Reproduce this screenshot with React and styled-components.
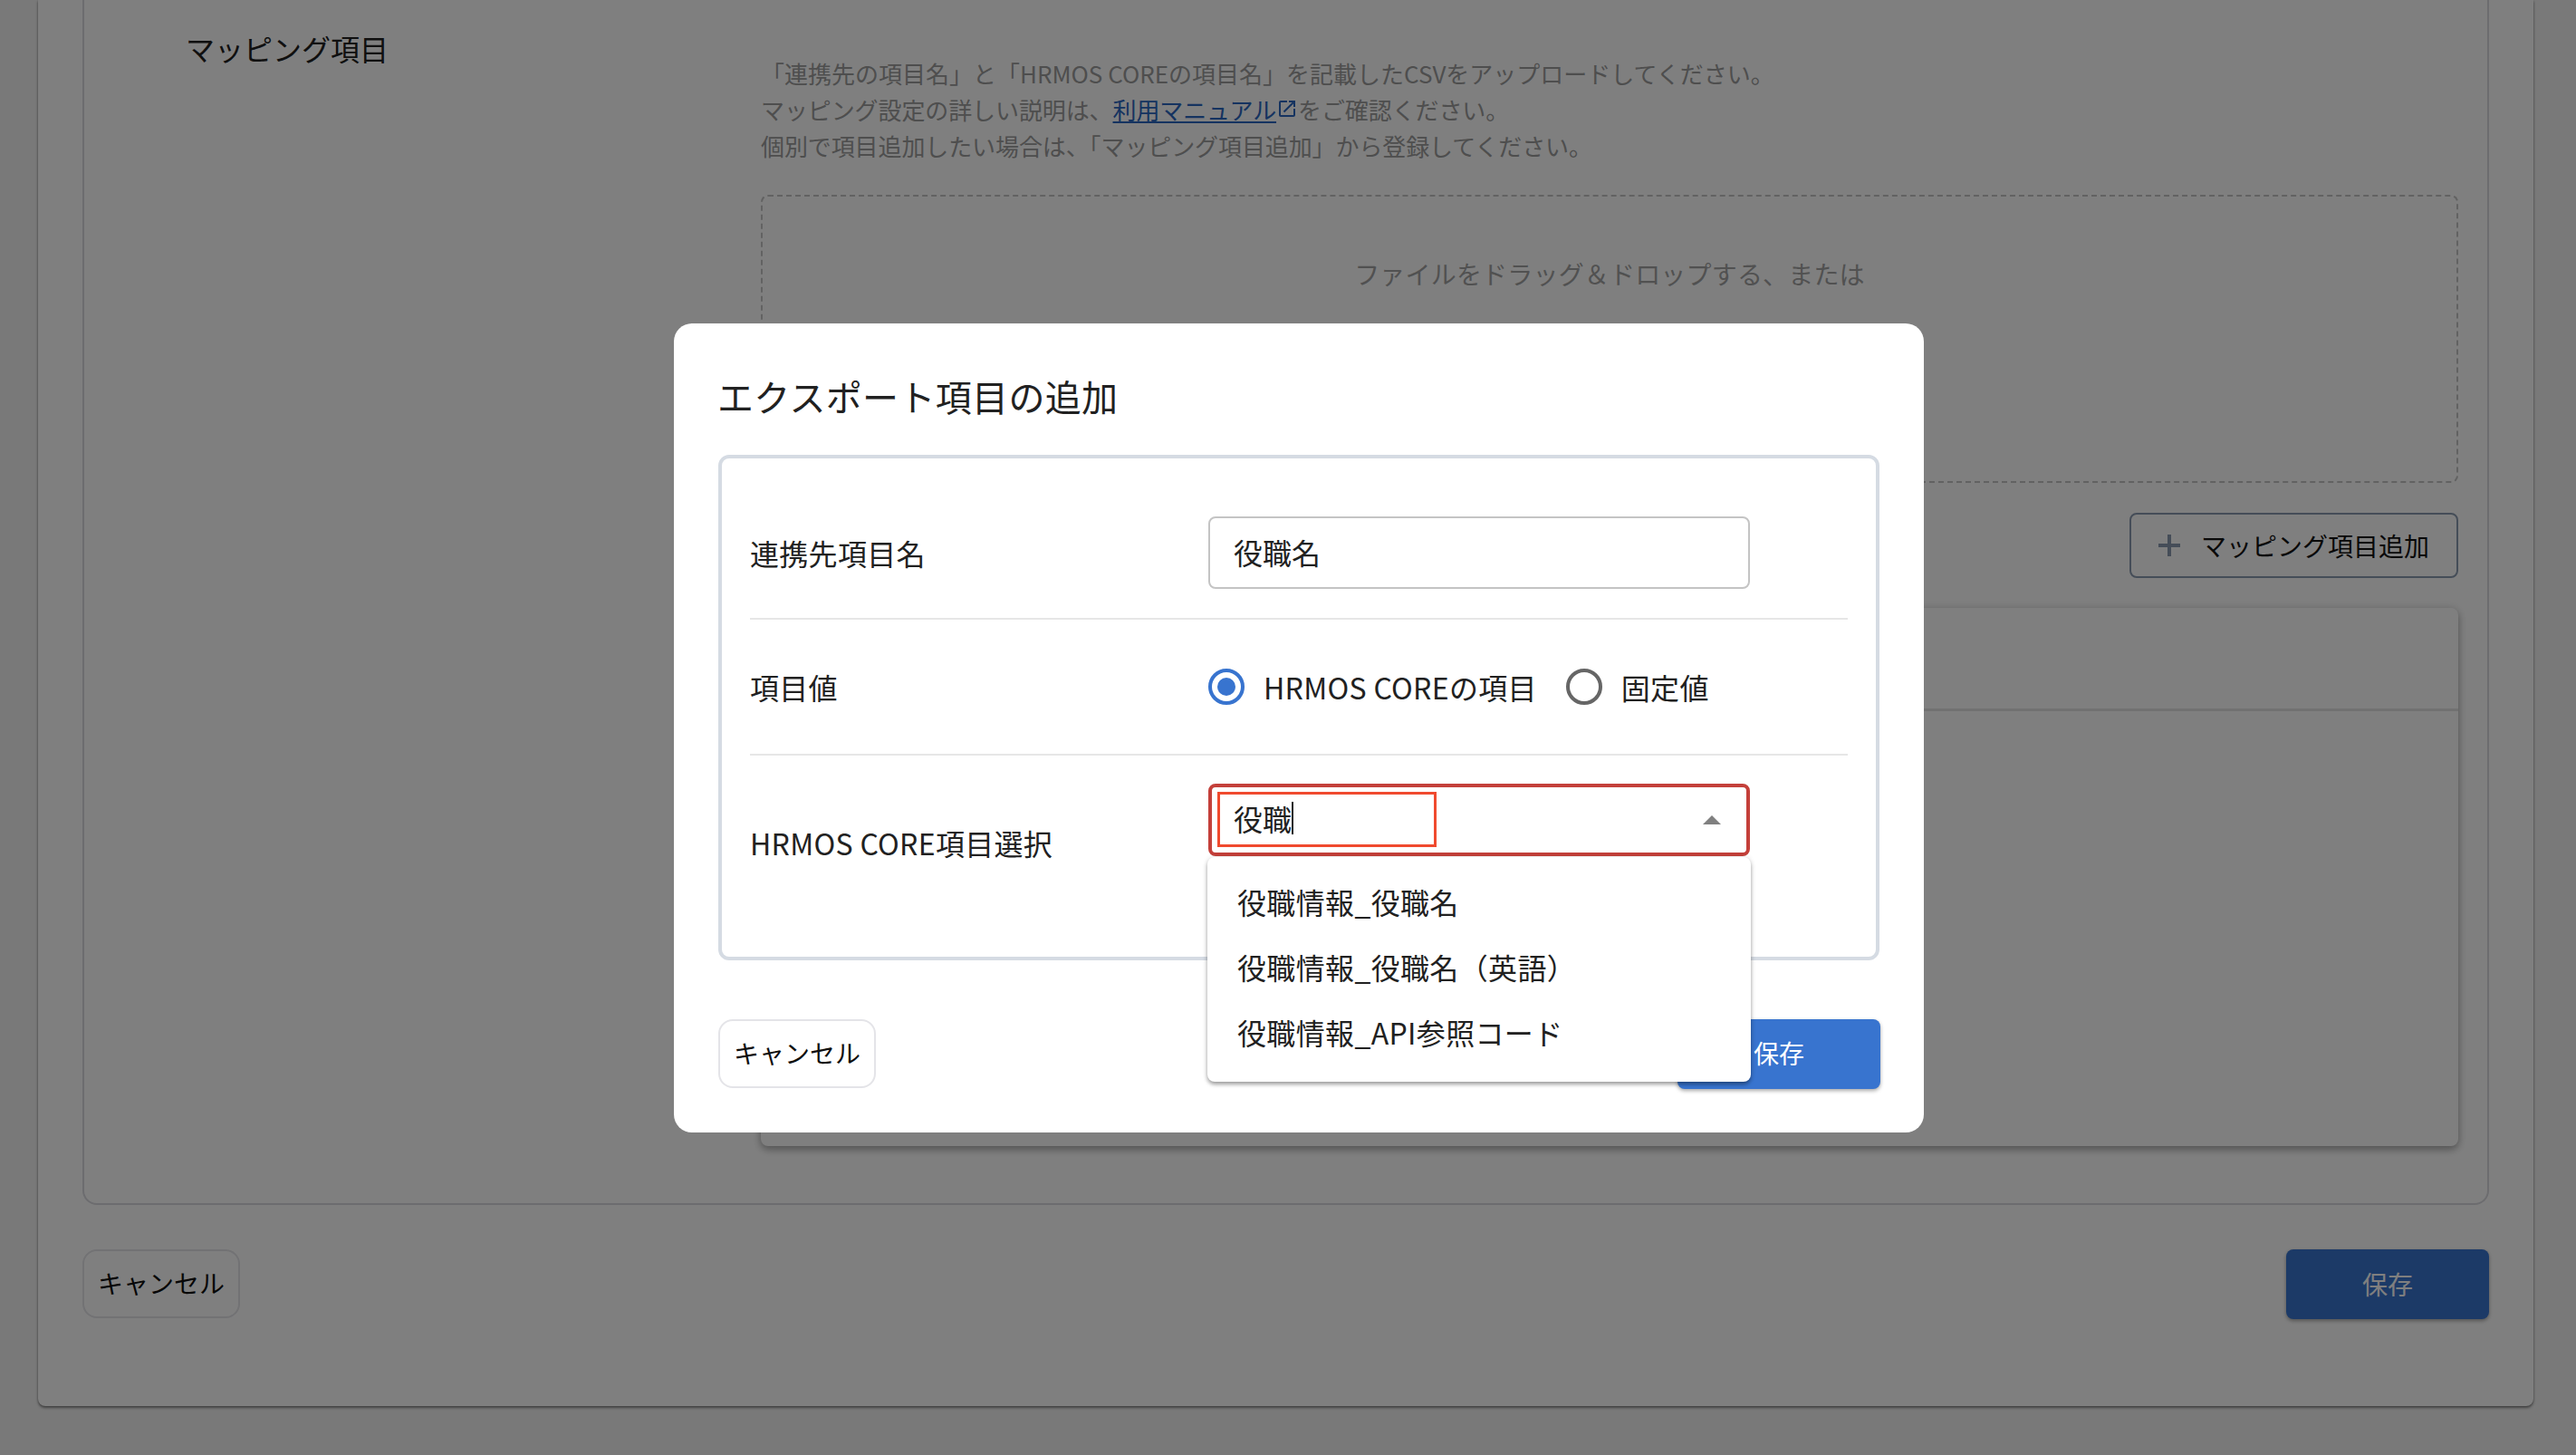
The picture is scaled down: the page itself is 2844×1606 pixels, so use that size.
import React from "react";
import styled, { createGlobalStyle } from "styled-components";

const FONT = `"Noto Sans CJK JP", "Noto Sans", sans-serif`;

const Global = createGlobalStyle`
  html, body { margin: 0; padding: 0; width: 2844px; height: 1606px; overflow: hidden; background: #f2f2f2; }
  * { box-sizing: border-box; }
  body { font-family: ${FONT}; color: #212121; }
`;

const Page = styled.div`
  position: relative;
  width: 2844px;
  height: 1606px;
  padding: 0 47px 54px 42px;
  overflow: hidden;
`;
const Card = styled.main`
  height: 1552px;
  background: #fff;
  border-radius: 0 0 8px 8px;
  box-shadow: 0 2px 3px rgba(0, 0, 0, 0.45), 0 0 2px rgba(0, 0, 0, 0.2);
  padding: 0 49px;
`;
const SettingsPanel = styled.section`
  height: 1330px;
  border: 2px solid #d9d9de;
  border-top: none;
  border-radius: 0 0 16px 16px;
  padding: 0 32px 0 112px;
  display: grid;
  grid-template-columns: 635px 1fr;
`;
const SectionTitle = styled.h2`
  margin: 30px 0 0;
  font-size: 32px;
  line-height: 46px;
  font-weight: 400;
  color: #212121;
`;
const SectionBody = styled.div`
  padding-top: 61px;
  display: flex;
  flex-direction: column;
`;
const Help = styled.p`
  margin: 0;
  font-size: 26px;
  line-height: 40px;
  color: #9c9c9c;
  letter-spacing: ${(p) => (p.$tight ? "-0.1px" : "0")};
`;
const ManualLink = styled.a`
  color: #2a66c0;
  text-decoration: underline;
`;
const LinkIcon = styled.svg`
  width: 24px;
  height: 24px;
  vertical-align: 0;
  fill: #2a66c0;
`;
const DropZone = styled.div`
  margin-top: 34px;
  height: 318px;
  border: 2px dashed #c4c4c4;
  border-radius: 8px;
  text-align: center;
  padding-top: 65px;
  font-size: 28px;
  line-height: 40px;
  letter-spacing: 0.18px;
  color: #a3a3a3;
`;
const AddRow = styled.div`
  margin-top: 33px;
  display: flex;
  justify-content: flex-end;
`;
const AddButton = styled.button`
  width: 363px;
  height: 72px;
  display: flex;
  align-items: center;
  padding: 0 0 0 28px;
  gap: 21px;
  background: transparent;
  border: 2px solid #8a9bb0;
  border-radius: 8px;
  font: 400 28px/40px ${FONT};
  color: #121212;
`;
const PlusIcon = styled.svg`
  width: 28px;
  height: 28px;
  stroke: #8a9bb0;
  stroke-width: 4;
  fill: none;
`;
const TablePanel = styled.div`
  margin-top: 33px;
  height: 594px;
  background: #fff;
  border-radius: 8px;
  box-shadow: 0 4px 8px rgba(0, 0, 0, 0.3), 0 0 12px rgba(0, 0, 0, 0.1);
`;
const TableHead = styled.div`
  height: 114px;
  border-bottom: 3px solid #e2e2e2;
`;
const PageFooter = styled.div`
  margin-top: 49px;
  display: flex;
  justify-content: space-between;
`;
const CancelButton = styled.button`
  width: 174px;
  height: 76px;
  background: #fff;
  border: 2px solid #e4e4e8;
  border-radius: 16px;
  font: 400 28px/40px ${FONT};
  color: #0f0f0f;
  padding: 0 0 2px;
`;
const SaveButton = styled.button`
  width: 224px;
  height: 77px;
  background: #3874cf;
  border: none;
  border-radius: 8px;
  box-shadow: 0 2px 4px rgba(0, 0, 0, 0.35);
  font: 400 28px/40px ${FONT};
  color: #fff;
  padding: 0 0 2px;
`;
const Overlay = styled.div`
  position: absolute;
  inset: 0;
  background: rgba(0, 0, 0, 0.5);
  display: flex;
  align-items: center;
  justify-content: center;
  padding-left: 24px;
`;
const Dialog = styled.div`
  width: 1380px;
  height: 893px;
  background: #fff;
  border-radius: 20px;
  padding: 0 49px;
`;
const DialogTitle = styled.h1`
  margin: 0 0 0 -1px;
  height: 145px;
  padding-top: 51px;
  font-size: 40px;
  line-height: 58px;
  font-weight: 400;
  letter-spacing: 0.33px;
  color: #212121;
`;
const FormBox = styled.div`
  height: 558px;
  width: 1282px;
  border: 4px solid #d5dbe3;
  border-radius: 12px;
  padding: 32px 31px 0;
`;
const FormRow = styled.div`
  display: grid;
  grid-template-columns: 506px 598px;
  align-items: center;
  padding: ${(p) => (p.$last ? "0" : "32px 0")};
  border-bottom: ${(p) => (p.$last ? "none" : "2px solid #e6e6e6")};
`;
const FieldLabel = styled.label`
  font-size: 32px;
  line-height: 46px;
  letter-spacing: 0.3px;
  color: #212121;
`;
const TextField = styled.input`
  width: 598px;
  height: 80px;
  border: 2px solid #c4c4c4;
  border-radius: 8px;
  padding: 0 26px 2px;
  font: 400 32px/46px ${FONT};
  color: #212121;
  outline: none;
`;
const RadioGroup = styled.div`
  display: flex;
  align-items: center;
  height: 84px;
`;
const RadioOption = styled.span`
  display: flex;
  align-items: center;
  gap: 21px;
  margin-right: 32px;
  font-size: 32px;
  line-height: 46px;
  letter-spacing: 0.3px;
  color: #212121;
`;
const RadioMark = styled.span`
  width: 40px;
  height: 40px;
  border-radius: 50%;
  border: 4px solid ${(p) => (p.$on ? "#3874cf" : "#666")};
  display: flex;
  align-items: center;
  justify-content: center;
  &::after {
    content: "";
    width: 20px;
    height: 20px;
    border-radius: 50%;
    background: ${(p) => (p.$on ? "#3874cf" : "transparent")};
  }
`;
const SelectWrap = styled.div`
  position: relative;
  width: 598px;
  margin: 31px 0 81px;
`;
const SelectBox = styled.div`
  height: 80px;
  border: 4px solid #c4403a;
  border-radius: 8px;
  padding: 0 28px 0 6px;
  display: flex;
  align-items: center;
  justify-content: space-between;
`;
const QueryBox = styled.div`
  width: 242px;
  height: 61px;
  border: 3px solid #f04a2e;
  padding: 0 0 4px 15px;
  display: flex;
  align-items: center;
  font-size: 32px;
  line-height: 46px;
  color: #212121;
`;
const Caret = styled.span`
  width: 2px;
  height: 36px;
  background: #212121;
`;
const ArrowIcon = styled.svg`
  width: 20px;
  height: 10px;
  fill: #808080;
`;
const Menu = styled.ul`
  position: absolute;
  top: 81px;
  left: -1px;
  width: 600px;
  margin: 0;
  padding: 16px 0;
  list-style: none;
  background: #fff;
  border-radius: 8px;
  box-shadow: 0 3px 4px rgba(0, 0, 0, 0.35), 0 0 6px rgba(0, 0, 0, 0.1);
  z-index: 2;
`;
const MenuItem = styled.li`
  height: 72px;
  padding: 0 0 6px 33px;
  display: flex;
  align-items: center;
  font-size: 32px;
  line-height: 46px;
  letter-spacing: 0.35px;
  color: #212121;
`;
const DialogFooter = styled.div`
  margin-top: 65px;
  width: 1283px;
  display: flex;
  justify-content: space-between;
`;

export default function App() {
  return (
    <>
      <Global />
      <Page>
        <Card>
          <SettingsPanel>
            <SectionTitle>マッピング項目</SectionTitle>
            <SectionBody>
              <Help>「連携先の項目名」と「HRMOS COREの項目名」を記載したCSVをアップロードしてください。</Help>
              <Help $tight>
                マッピング設定の詳しい説明は、<ManualLink>利用マニュアル</ManualLink>
                <LinkIcon viewBox="0 0 24 24">
                  <path d="M19 19H5V5h7V3H5c-1.11 0-2 .9-2 2v14c0 1.1.89 2 2 2h14c1.1 0 2-.9 2-2v-7h-2v7zM14 3v2h3.59l-9.83 9.83 1.41 1.41L19 6.41V10h2V3h-7z" />
                </LinkIcon>
                をご確認ください。
              </Help>
              <Help $tight>個別で項目追加したい場合は、「マッピング項目追加」から登録してください。</Help>
              <DropZone>ファイルをドラッグ＆ドロップする、または</DropZone>
              <AddRow>
                <AddButton>
                  <PlusIcon viewBox="0 0 28 28">
                    <path d="M14 2v24M2 14h24" />
                  </PlusIcon>
                  マッピング項目追加
                </AddButton>
              </AddRow>
              <TablePanel>
                <TableHead />
              </TablePanel>
            </SectionBody>
          </SettingsPanel>
          <PageFooter>
            <CancelButton>キャンセル</CancelButton>
            <SaveButton>保存</SaveButton>
          </PageFooter>
        </Card>
        <Overlay>
          <Dialog>
            <DialogTitle>エクスポート項目の追加</DialogTitle>
            <FormBox>
              <FormRow>
                <FieldLabel>連携先項目名</FieldLabel>
                <TextField readOnly defaultValue="役職名" />
              </FormRow>
              <FormRow>
                <FieldLabel>項目値</FieldLabel>
                <RadioGroup>
                  <RadioOption>
                    <RadioMark $on />
                    HRMOS COREの項目
                  </RadioOption>
                  <RadioOption>
                    <RadioMark />
                    固定値
                  </RadioOption>
                </RadioGroup>
              </FormRow>
              <FormRow $last>
                <FieldLabel>HRMOS CORE項目選択</FieldLabel>
                <SelectWrap>
                  <SelectBox>
                    <QueryBox>
                      役職
                      <Caret />
                    </QueryBox>
                    <ArrowIcon viewBox="0 0 20 10">
                      <polygon points="10,0 20,10 0,10" />
                    </ArrowIcon>
                  </SelectBox>
                  <Menu>
                    <MenuItem>役職情報_役職名</MenuItem>
                    <MenuItem>役職情報_役職名（英語）</MenuItem>
                    <MenuItem>役職情報_API参照コード</MenuItem>
                  </Menu>
                </SelectWrap>
              </FormRow>
            </FormBox>
            <DialogFooter>
              <CancelButton>キャンセル</CancelButton>
              <SaveButton>保存</SaveButton>
            </DialogFooter>
          </Dialog>
        </Overlay>
      </Page>
    </>
  );
}
